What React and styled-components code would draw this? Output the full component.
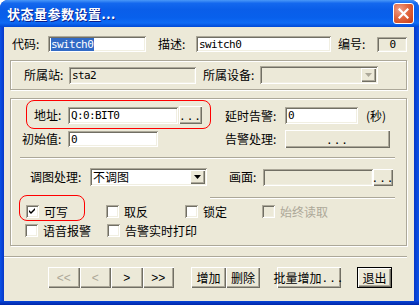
import React from 'react'
import styled, { createGlobalStyle } from 'styled-components'

const Global = createGlobalStyle`
  html, body { margin: 0; padding: 0; background: #fff; }
  * { box-sizing: border-box; }
`;

const CJK = `"Noto Sans CJK SC", "Noto Sans", sans-serif`;
const MONO = `"DejaVu Sans Mono", "Noto Sans CJK SC", monospace`;

const Frame = styled.div`
  width: 419px;
  height: 305px;
  display: flex;
  flex-direction: column;
  border-radius: 8px 8px 0 0;
  overflow: hidden;
  background: #0842d9;
  font-family: ${CJK};
  font-size: 12px;
  color: #000;
`;

const TitleBar = styled.div`
  height: 27px;
  display: flex;
  align-items: center;
  padding: 0 5px 0 7px;
  background: linear-gradient(to bottom, #4a98f8 0%, #1468ee 12%, #0a5ee9 35%, #0860ec 65%, #0e6af4 85%, #0049d6 100%);
`;

const Title = styled.div`
  flex: 1;
  color: #fff;
  font-weight: bold;
  font-size: 13px;
  letter-spacing: 0.5px;
  text-shadow: 1px 1px 0 #0a1e8a;
  line-height: 1;
`;

const CloseBtn = styled.div`
  width: 21px;
  height: 21px;
  border: 1px solid #fff;
  border-radius: 3px;
  background: radial-gradient(circle at 30% 30%, #f0a08a 0%, #e2673f 45%, #c63c16 100%);
  display: flex;
  align-items: center;
  justify-content: center;
`;

const Middle = styled.div`
  flex: 1;
  display: flex;
`;

const Edge = styled.div`
  width: ${p => p.$w}px;
  background: linear-gradient(to ${p => p.$side}, #0a52e6, #0738c9);
`;

const BottomEdge = styled.div`
  height: 4px;
  background: linear-gradient(to bottom, #0845d6, #0026a8);
`;

const Body = styled.div`
  width: 410px;
  background: #ece9d8;
  display: flex;
  flex-direction: column;
`;

const Row = styled.div`
  display: flex;
  align-items: ${p => p.$align || 'center'};
  margin-top: ${p => p.$mt || 0}px;
  padding-left: ${p => p.$pl || 0}px;
  height: ${p => (p.$h ? `${p.$h}px` : 'auto')};
`;

const Label = styled.span`
  display: inline-block;
  width: ${p => (p.$w ? `${p.$w}px` : 'auto')};
  margin-left: ${p => p.$ml || 0}px;
  white-space: nowrap;
  line-height: 1;
  color: ${p => (p.$disabled ? '#aca899' : '#000')};
`;

const Field = styled.div`
  width: ${p => p.$w}px;
  height: ${p => p.$h || 17}px;
  margin-left: ${p => p.$ml || 0}px;
  background: ${p => (p.$disabled ? '#ece9d8' : '#fff')};
  box-shadow: inset 1px 1px 0 #aca899, inset -1px -1px 0 #fff, inset 2px 2px 0 #716f64, inset -2px -2px 0 #f1efe2;
  display: flex;
  align-items: center;
  justify-content: ${p => (p.$center ? 'center' : 'flex-start')};
  padding: 0 2px 0 3px;
  font-family: ${MONO};
  font-size: 11px;
  letter-spacing: -0.6px;
  line-height: 1;
  white-space: nowrap;
  overflow: hidden;
`;

const Selected = styled.span`
  background: #316ac5;
  color: #fff;
  padding: 1px 1px 1px 0;
`;

const Btn = styled.div`
  width: ${p => p.$w}px;
  height: ${p => p.$h || 21}px;
  margin-left: ${p => p.$ml || 0}px;
  background: #ece9d8;
  box-shadow: inset 1px 1px 0 #fff, inset -1px -1px 0 #716f64, inset -2px -2px 0 #aca899;
  border: ${p => (p.$default ? '1px solid #000' : 'none')};
  display: flex;
  align-items: center;
  justify-content: center;
  color: ${p => (p.$disabled ? '#aca899' : '#000')};
  line-height: 1;
  white-space: nowrap;
  flex-shrink: 0;
`;

const Dots = styled.span`
  font-family: ${MONO};
  font-size: 11px;
  letter-spacing: 1px;
  margin-top: 2px;
`;

const Combo = styled(Field)`
  justify-content: space-between;
  padding-right: 2px;
`;

const ComboArrow = styled.div`
  width: 15px;
  height: ${p => p.$h}px;
  background: #ece9d8;
  box-shadow: inset 1px 1px 0 #fff, inset -1px -1px 0 #716f64, inset -2px -2px 0 #aca899;
  display: flex;
  align-items: center;
  justify-content: center;
`;

const ComboText = styled.span`
  font-family: ${CJK};
  font-size: 12px;
  letter-spacing: 0;
`;

const Group = styled.div`
  width: 397px;
  height: ${p => p.$h}px;
  margin-left: 6px;
  margin-top: ${p => p.$mt}px;
  border: 1px solid #aca899;
  box-shadow: inset 1px 1px 0 #fff, 1px 1px 0 #fff;
  display: flex;
  flex-direction: ${p => p.$dir || 'row'};
  align-items: ${p => (p.$dir === 'column' ? 'stretch' : 'center')};
  padding-left: ${p => p.$pl || 0}px;
`;

const Sep = styled.div`
  width: ${p => p.$w}px;
  height: 2px;
  margin-left: ${p => p.$ml || 0}px;
  margin-top: ${p => p.$mt || 0}px;
  border-top: 1px solid #aca899;
  border-bottom: 1px solid #fff;
  flex-shrink: 0;
`;

const Section = styled.div`
  display: flex;
  height: ${p => p.$h}px;
`;

const Column = styled.div`
  display: flex;
  flex-direction: column;
  width: ${p => (p.$w ? `${p.$w}px` : 'auto')};
  margin-left: ${p => p.$ml || 0}px;
`;

const Marked = styled.div`
  display: flex;
  align-items: ${p => p.$align || 'center'};
  width: ${p => p.$w}px;
  height: ${p => p.$h}px;
  margin-left: ${p => p.$ml || 0}px;
  margin-top: ${p => p.$mt || 0}px;
  padding-left: ${p => p.$pl || 0}px;
  padding-top: ${p => p.$pt || 0}px;
  border: 1px solid #ff0000;
  border-radius: 8px;
  flex-shrink: 0;
`;

const CheckItem = styled.div`
  display: flex;
  align-items: center;
  width: ${p => (p.$w ? `${p.$w}px` : 'auto')};
  margin-top: ${p => p.$mt || 0}px;
  gap: 5px;
  flex-shrink: 0;
`;

const Box = styled.div`
  width: 13px;
  height: 13px;
  background: ${p => (p.$disabled ? '#ece9d8' : '#fff')};
  box-shadow: inset 1px 1px 0 #aca899, inset -1px -1px 0 #fff, inset 2px 2px 0 #716f64, inset -2px -2px 0 #f1efe2;
  display: flex;
  align-items: center;
  justify-content: center;
`;

const Check = ({ label, checked, disabled, w, mt }) => (
  <CheckItem $w={w} $mt={mt}>
    <Box $disabled={disabled}>
      {checked && (
        <svg width="7" height="7" viewBox="0 0 7 7">
          <path d="M0 2 L2 4 L6 0 L6 2 L2 6 L0 4 Z" fill="#000" />
        </svg>
      )}
    </Box>
    <Label $disabled={disabled}>{label}</Label>
  </CheckItem>
);

const Arrow = ({ color = '#000' }) => (
  <svg width="7" height="4" viewBox="0 0 7 4">
    <path d="M0 0 H7 L3.5 4 Z" fill={color} />
  </svg>
);

const ButtonBar = styled.div`
  display: flex;
  margin-top: 9px;
  padding-left: 44px;
`;

const NavGlyph = styled.span`
  font-family: "Liberation Sans", sans-serif;
  font-size: 12px;
  letter-spacing: 0;
`;

export default function App() {
  return (
    <>
      <Global />
      <Frame>
        <TitleBar>
          <Title>状态量参数设置...</Title>
          <CloseBtn>
            <svg width="11" height="11" viewBox="0 0 11 11">
              <path d="M1.5 1.5 L9.5 9.5 M9.5 1.5 L1.5 9.5" stroke="#fff" strokeWidth="2.2" strokeLinecap="square" />
            </svg>
          </CloseBtn>
        </TitleBar>
        <Middle>
          <Edge $w={4} $side="right" />
          <Body>
            <Row $mt={9} $pl={8} $h={16}>
              <Label $w={36}>代码:</Label>
              <Field $w={98} $h={16}><Selected>switch0</Selected></Field>
              <Label $w={38} $ml={12}>描述:</Label>
              <Field $w={135} $h={16}>switch0</Field>
              <Label $w={39} $ml={7}>编号:</Label>
              <Field $w={30} $h={15} $disabled $center>0</Field>
            </Row>

            <Group $mt={8} $h={30} $pl={13}>
              <Label $w={45}>所属站:</Label>
              <Field $w={127} $disabled>sta2</Field>
              <Label $w={57} $ml={7}>所属设备:</Label>
              <Combo $w={118} $h={18} $disabled>
                <span />
                <ComboArrow $h={14}><Arrow color="#aca899" /></ComboArrow>
              </Combo>
            </Group>

            <Group $mt={8} $h={148} $dir="column">
              <Section $h={58}>
                <Column $w={200}>
                  <Marked $ml={15} $mt={1} $w={185} $h={29} $pl={7} $pt={1}>
                    <Label $w={34}>地址:</Label>
                    <Field $w={110}>Q:0:BIT0</Field>
                    <Btn $w={23} $h={18} $ml={1}><Dots>...</Dots></Btn>
                  </Marked>
                  <Row $mt={2} $pl={11} $h={16}>
                    <Label $w={46}>初始值:</Label>
                    <Field $w={90} $h={16}>0</Field>
                  </Row>
                </Column>
                <Column $ml={14}>
                  <Row $mt={8} $h={17}>
                    <Label $w={60}>延时告警:</Label>
                    <Field $w={73}>0</Field>
                    <Label $ml={8}>(秒)</Label>
                  </Row>
                  <Row $mt={6} $h={18}>
                    <Label $w={60}>告警处理:</Label>
                    <Btn $w={105} $h={18}><Dots>...</Dots></Btn>
                  </Row>
                </Column>
              </Section>
              <Sep $ml={9} $w={375} />

              <Row $mt={9} $pl={19} $h={18}>
                <Label $w={60}>调图处理:</Label>
                <Combo $w={117} $h={18}>
                  <ComboText>不调图</ComboText>
                  <ComboArrow $h={14}><Arrow /></ComboArrow>
                </Combo>
                <Label $w={34} $ml={22}>画面:</Label>
                <Field $w={110} $disabled />
                <Btn $w={20} $h={17}><Dots>...</Dots></Btn>
              </Row>
              <Sep $ml={199} $w={185} $mt={11} />

              <Row $mt={-4} $align="flex-start">
                <Marked $ml={8} $w={66} $h={26} $pl={6} $pt={9} $align="flex-start">
                  <Check label="可写" checked />
                </Marked>
                <Row $pl={21}>
                  <Check label="取反" w={79} mt={10} />
                  <Check label="锁定" w={77} mt={10} />
                  <Check label="始终读取" disabled mt={10} />
                </Row>
              </Row>
              <Row $mt={3} $pl={14}>
                <Check label="语音报警" w={82} />
                <Check label="告警实时打印" />
              </Row>
            </Group>

            <Sep $w={403} $mt={10} />

            <ButtonBar>
              <Btn $w={31.5} $disabled><NavGlyph>&lt;&lt;</NavGlyph></Btn>
              <Btn $w={31.5} $disabled><NavGlyph>&lt;</NavGlyph></Btn>
              <Btn $w={31.5}><NavGlyph>&gt;</NavGlyph></Btn>
              <Btn $w={31.5}><NavGlyph>&gt;&gt;</NavGlyph></Btn>
              <Btn $w={35} $ml={17}>增加</Btn>
              <Btn $w={34}>删除</Btn>
              <Btn $w={64} $ml={17}>批量增加<Dots>...</Dots></Btn>
              <Btn $w={35} $ml={16} $default>退出</Btn>
            </ButtonBar>
          </Body>
          <Edge $w={5} $side="left" />
        </Middle>
        <BottomEdge />
      </Frame>
    </>
  )
}
